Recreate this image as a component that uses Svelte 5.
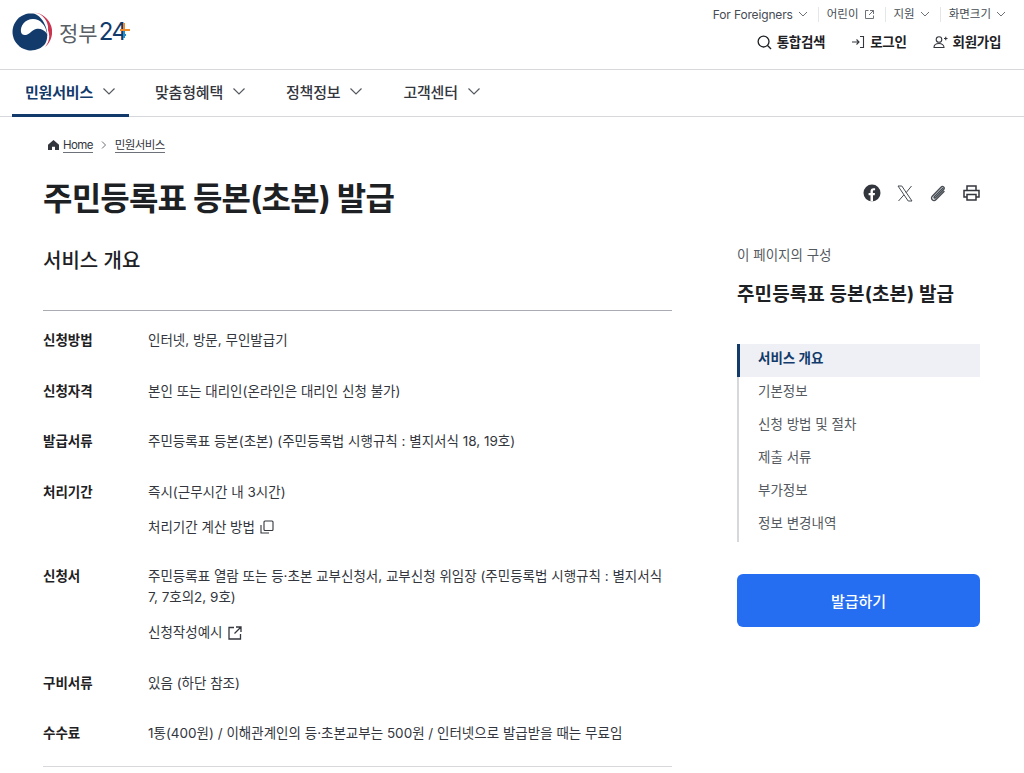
<script>
  const rows = [
    { label: '신청방법', lines: ['인터넷, 방문, 무인발급기'] },
    { label: '신청자격', lines: ['본인 또는 대리인(온라인은 대리인 신청 불가)'] },
    { label: '발급서류', lines: ['주민등록표 등본(초본) (주민등록법 시행규칙 : 별지서식 18, 19호)'] },
    { label: '처리기간', lines: ['즉시(근무시간 내 3시간)'], link: '처리기간 계산 방법', icon: 'copy' },
    { label: '신청서', lines: ['주민등록표 열람 또는 등·초본 교부신청서, 교부신청 위임장 (주민등록법 시행규칙 : 별지서식 7, 7호의2, 9호)'], link: '신청작성예시', icon: 'out' },
    { label: '구비서류', lines: ['있음 (하단 참조)'] },
    { label: '수수료', lines: ['1통(400원) / 이해관계인의 등·초본교부는 500원 / 인터넷으로 발급받을 때는 무료임'] }
  ];
  const toc = ['서비스 개요', '기본정보', '신청 방법 및 절차', '제출 서류', '부가정보', '정보 변경내역'];
  const menu = ['민원서비스', '맞춤형혜택', '정책정보', '고객센터'];
</script>

<header class="top">
  <a class="logo" href="#top">
    <svg width="40" height="40" viewBox="0 0 40 40">
      <path d="M22 .5A19.500 19.500 0 0 1 33 35A17 17 0 0 0 36 18A16 16 0 0 0 22 .5z" fill="#c9344f" />
      <path d="M21 1.500A18.500 18.500 0 1 0 33 32C36 27 36 20 33 13C30 6 25 2 21 1.500z" fill="#123a6b" />
      <path d="M9 20C8 14 13 7 21 7C28 7 34 13 35 22C33 18 28 16 24 17C20 18 18 22 14 23C11 23.500 9.500 22 9 20z" fill="#fff" />
    </svg>
    <span class="logo-text">정부<b>24<svg class="plus" width="10" height="15" viewBox="0 0 10 15"><path d="M4 0v7M0 7h10" stroke="#ef8a2c" stroke-width="2" /><path d="M4 8v7" stroke="#1f8fc4" stroke-width="2" /></svg></b></span>
  </a>
  <div class="util">
    <ul class="util-top">
      <li class="en">For Foreigners <svg class="chev" width="10" height="6" viewBox="0 0 10 6"><path d="M1 1l4 4 4-4" /></svg></li>
      <li>어린이 <svg class="chev" width="11" height="11" viewBox="0 0 11 11"><path d="M4.500 1.500h-3v8h8v-3M6 1.500h3.500v3.500M9.500 1.500L5 6" /></svg></li>
      <li>지원 <svg class="chev" width="10" height="6" viewBox="0 0 10 6"><path d="M1 1l4 4 4-4" /></svg></li>
      <li>화면크기 <svg class="chev" width="10" height="6" viewBox="0 0 10 6"><path d="M1 1l4 4 4-4" /></svg></li>
    </ul>
    <div class="util-main">
      <span class="u-item">
        <svg width="15" height="15" viewBox="0 0 16 16" fill="none" stroke="#1e2124" stroke-width="1.400"><circle cx="7" cy="7" r="5.800" /><path d="M11.200 11.200L15 15" /></svg>
        통합검색
      </span>
      <span class="u-item">
        <svg width="14" height="14" viewBox="0 0 14 14" fill="none" stroke="#33363d" stroke-width="1.100"><path d="M1 7h7M5.500 4.500L8 7l-2.500 2.500M9 1.500h3.500v11H9" /></svg>
        로그인
      </span>
      <span class="u-item">
        <svg width="15" height="14" viewBox="0 0 15 14" fill="none" stroke="#33363d" stroke-width="1.100"><circle cx="6" cy="4.500" r="2.800" /><path d="M1 12.500c0-2.500 2-4 5-4s5 1.500 5 4zM11 3.500h3.500M12.750 1.750v3.500" /></svg>
        회원가입
      </span>
    </div>
  </div>
</header>

<nav class="gnb">
  {#each menu as m, i}
    <a class="gnb-item" class:on={i === 0} href="#top">
      {m}
      <svg width="12" height="7" viewBox="0 0 12 7" fill="none" stroke="currentColor" stroke-width="1.200"><path d="M.5 .5L6 6l5.500-5.500" /></svg>
    </a>
  {/each}
</nav>

<main class="page">
  <div class="crumb">
    <svg width="11" height="10" viewBox="0 0 11 10"><path d="M5.500 0L11 4.700V10H7V6.800H4V10H0V4.700z" fill="#33363d" /></svg>
    <span class="c-link">Home</span>
    <svg class="c-sep" width="6" height="8" viewBox="0 0 6 8" fill="none" stroke="#6d7178" stroke-width="1"><path d="M1 .5L4.500 4 1 7.500" /></svg>
    <span class="c-link">민원서비스</span>
  </div>

  <div class="title-row">
    <h1>주민등록표 등본(초본) 발급</h1>
    <div class="share">
      <svg width="18" height="18" viewBox="0 0 18 18"><circle cx="9" cy="9" r="8.500" fill="#33363d" /><path d="M7.500 17.500V11.200H5.600V9h1.900V7.300c0-2 1.200-3.100 3-3.100.9 0 1.600.1 1.600.1v1.900h-.9c-1 0-1.300.6-1.300 1.200V9h2.100l-.3 2.200H10V17.500z" fill="#fff" /></svg>
      <svg width="16" height="17" viewBox="0 0 16 17" fill="none" stroke="#464c53" stroke-width="1"><path d="M1 1h3.800L15 16h-3.800zM14.500 1L9 7.800M6.800 10L1.500 16" /></svg>
      <svg width="18" height="17" viewBox="0 0 18 17" fill="none" stroke="#464c53" stroke-width="1.400" stroke-linecap="round"><path d="M13.500 3.500l-8 8c-1 1-.2 2.200.8 1.400l8.200-8.200c1.800-1.800-.7-4.300-2.500-2.500L3.500 11c-2.800 2.800 1 6 3.600 3.500l7.900-7.900" /></svg>
      <svg width="17" height="16" viewBox="0 0 17 16" fill="none" stroke="#33363d" stroke-width="1.500"><path d="M4 5V1h9v4M4 12H1V5.500h15V12h-3M4 9.500h9V15H4z" /></svg>
    </div>
  </div>

  <div class="cols">
    <section class="body">
      <h2>서비스 개요</h2>
      <dl class="info">
        {#each rows as r}
          <div class="row">
            <dt>{r.label}</dt>
            <dd>
              {#each r.lines as l}<p>{l}</p>{/each}
              {#if r.link}
                <p class="more">
                  {r.link}
                  {#if r.icon === 'copy'}
                    <svg width="14" height="14" viewBox="0 0 14 14" fill="none" stroke="#33363d" stroke-width="1.100"><rect x="4" y="1" width="9" height="9.500" rx="1" /><path d="M1 5v8h8" /></svg>
                  {:else}
                    <svg width="14" height="14" viewBox="0 0 14 14" fill="none" stroke="#33363d" stroke-width="1.300"><path d="M6 1.500H1v11.500h11.500V8M8 1h5v5M13 1L6.500 7.500" /></svg>
                  {/if}
                </p>
              {/if}
            </dd>
          </div>
        {/each}
      </dl>
    </section>

    <aside class="side">
      <p class="side-label">이 페이지의 구성</p>
      <p class="side-title">주민등록표 등본(초본) 발급</p>
      <ul class="toc">
        {#each toc as t, i}
          <li class:on={i === 0}>{t}</li>
        {/each}
      </ul>
      <button class="issue">발급하기</button>
    </aside>
  </div>
</main>

<style>
  :global(body) {
    margin: 0;
    background: #fff;
    color: #1e2124;
    font-family: "Inter", "Noto Sans CJK KR", sans-serif;
  }

  :global(html), :global(body) {
    overflow: hidden;
    height: 773px;
  }

  a { color: inherit; text-decoration: none; }
  p, ul, dl, dd, h1, h2 { margin: 0; padding: 0; }
  ul { list-style: none; }

  .top {
    height: 69px;
    border-bottom: 1px solid #d6d8db;
    display: flex;
    justify-content: space-between;
    padding: 0 18px 0 12px;
  }

  .logo {
    display: flex;
    align-items: center;
    gap: 7px;
    height: 63px;
  }

  .logo-text {
    font-size: 21px;
    color: #5a5f66;
    display: flex;
    align-items: center;
  }

  .logo-text b {
    position: relative;
    font-weight: 400;
    font-size: 24px;
    color: #123a6b;
    letter-spacing: -1.500px;
    margin-left: 1px;
  }

  .plus {
    position: absolute;
    left: 21px;
    top: 6px;
  }

  .util {
    display: flex;
    flex-direction: column;
    align-items: flex-end;
  }

  .util-top {
    display: flex;
    height: 28px;
    align-items: center;
    font-size: 11.500px;
    color: #464c53;
  }

  .util-top li {
    display: flex;
    align-items: center;
    gap: 5px;
    padding: 0 10px 0 8px;
    border-left: 1px solid #e4e6e8;
    line-height: 15px;
  }

  .util-top li:first-child { border-left: 0; }
  .util-top li:last-child { padding-right: 0; }

  .util-top .en {
    font-size: 12px;
    letter-spacing: -0.150px;
  }

  .chev { fill: none; stroke: #6d7178; stroke-width: 1; }

  .util-main {
    display: flex;
    gap: 26px;
    margin-top: 1px;
    padding-right: 5px;
    font-size: 13.500px;
    font-weight: 700;
    line-height: 26px;
  }

  .u-item { display: flex; align-items: center; gap: 5px; letter-spacing: -0.300px; }

  .gnb {
    height: 46px;
    border-bottom: 1px solid #d6d8db;
    display: flex;
    padding-left: 12px;
    gap: 26px;
  }

  .gnb-item {
    display: flex;
    align-items: center;
    gap: 10px;
    height: 46px;
    padding: 0 15px 3px 0;
    font-size: 15px;
    font-weight: 500;
    letter-spacing: -0.200px;
    color: #33363d;
    box-sizing: border-box;
  }

  .gnb-item svg { color: #555a61; }

  .gnb-item.on {
    color: #123a6b;
    font-weight: 700;
    border-bottom: 3px solid #123a6b;
    height: 47px;
    width: 117px;
    padding: 0 0 1px 13px;
  }

  .page { padding: 0 44px 0 43px; }

  .crumb {
    display: flex;
    align-items: center;
    height: 56px;
    padding-left: 5px;
    font-size: 11.500px;
    color: #33363d;
  }

  .c-link {
    border-bottom: 1px solid #6d7178;
    line-height: 14px;
    letter-spacing: -0.600px;
  }

  .crumb svg:first-child { margin-right: 4px; }
  .c-sep { margin: 0 8px; }

  .title-row {
    display: flex;
    justify-content: space-between;
    align-items: center;
    height: 56px;
    margin-top: -2px;
  }

  h1 {
    font-size: 32px;
    font-weight: 700;
    letter-spacing: -0.800px;
    line-height: 56px;
  }

  .share {
    display: flex;
    align-items: center;
    gap: 16px;
    margin-top: -12px;
  }

  .cols {
    display: flex;
    justify-content: space-between;
    margin-top: 20px;
  }

  .body { width: 629px; }

  h2 {
    font-size: 20px;
    font-weight: 500;
    line-height: 28px;
    padding-bottom: 35px;
    border-bottom: 1px solid #a9acb1;
  }

  .info {
    padding: 14px 0 17px;
    border-bottom: 1px solid #d6d8db;
    font-size: 13.500px;
    line-height: 21px;
    color: #33363d;
    word-break: keep-all;
  }

  .row {
    display: flex;
    padding: 5px 0 24.500px;
  }

  .row:nth-child(4) { padding-bottom: 23.500px; }
  .row:last-child { padding-bottom: 5px; }

  dt {
    width: 105px;
    flex: none;
    font-weight: 700;
    color: #1e2124;
  }

  dd { flex: 1; }

  .more {
    display: flex;
    align-items: center;
    gap: 5px;
    margin-top: 14px;
  }

  .side { width: 243px; }

  .side-label { font-size: 13.500px; color: #555a61; line-height: 16px; }

  .side-title {
    font-size: 19px;
    font-weight: 700;
    line-height: 28px;
    margin-top: 18px;
    letter-spacing: 0.100px;
  }

  .toc {
    margin-top: 35px;
    border-left: 2px solid #d6d8db;
    font-size: 13.500px;
    color: #555a61;
  }

  .toc li {
    height: 33px;
    line-height: 29px;
    padding-left: 19px;
  }

  .toc li.on {
    margin-left: -2px;
    border-left: 3px solid #123a6b;
    padding-left: 18px;
    background: #eef0f5;
    color: #123a6b;
    font-weight: 700;
  }

  .issue {
    display: block;
    width: 100%;
    height: 53px;
    margin-top: 32px;
    border: 0;
    border-radius: 6px;
    background: #256ef1;
    color: #fff;
    font: 500 15px "Inter", "Noto Sans CJK KR", sans-serif;
  }
</style>
